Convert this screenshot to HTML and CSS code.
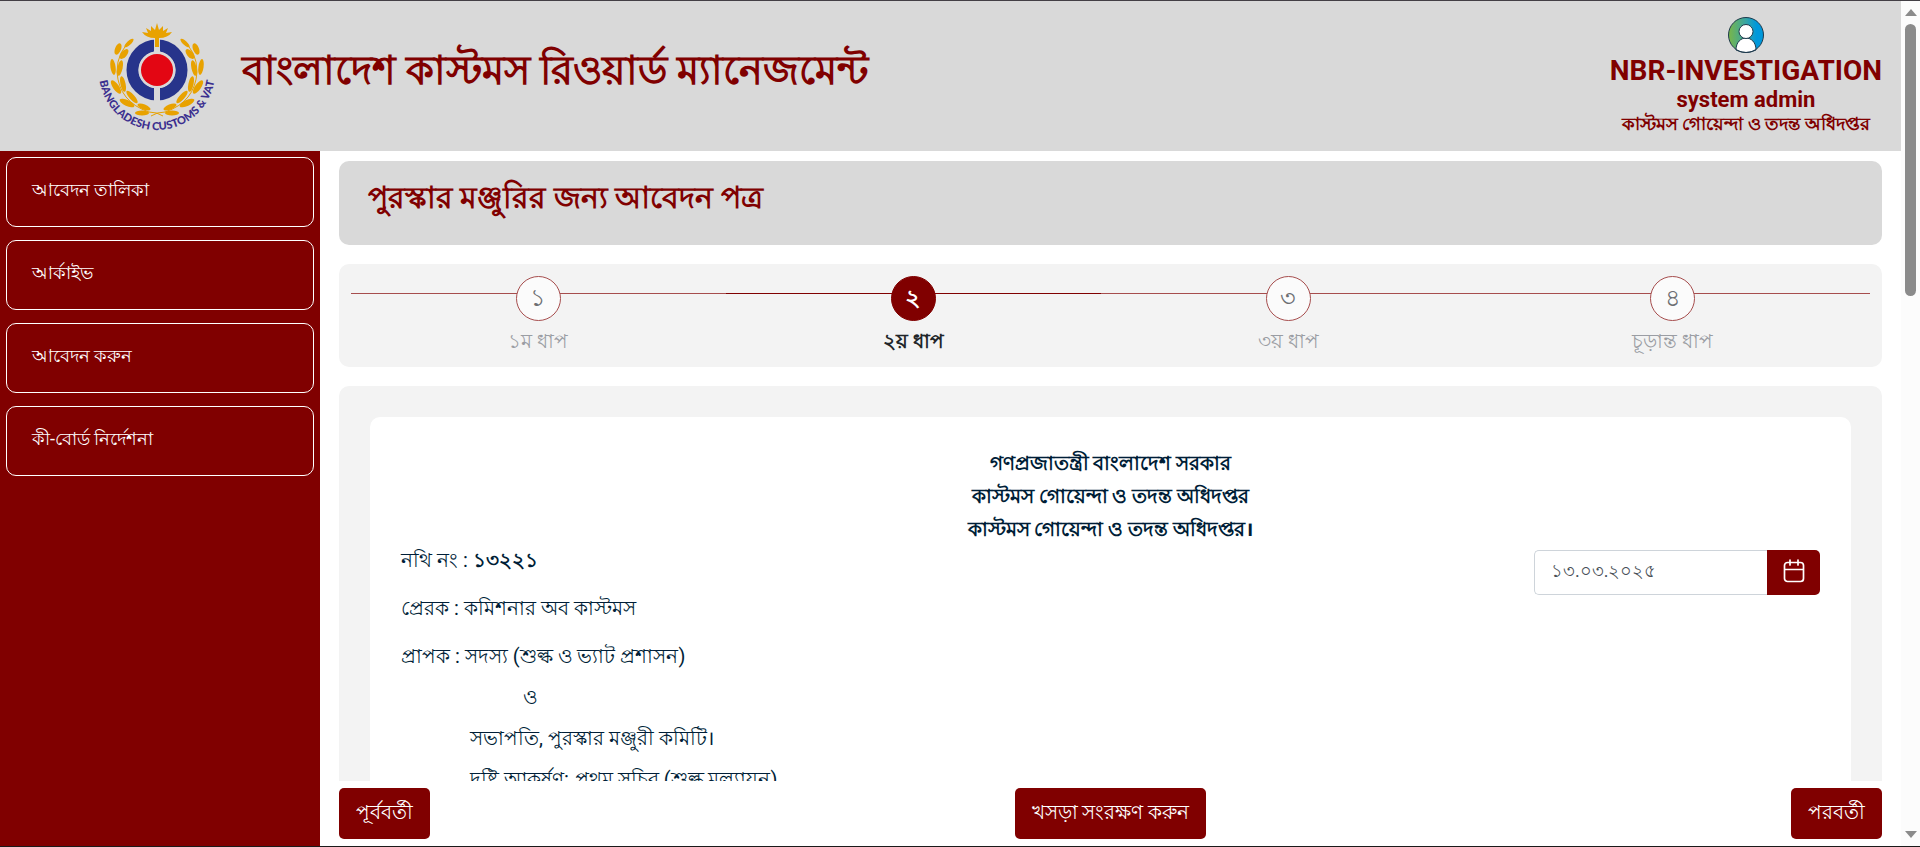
FILE: index.html
```
<!DOCTYPE html>
<html lang="bn">
<head>
    <meta charset="UTF-8">
    <meta name="viewport" content="width=device-width, initial-scale=1.0">
    <title>বাংলাদেশ কাস্টমস রিওয়ার্ড ম্যানেজমেন্ট</title>
    <link rel="stylesheet" href="styles.css">
</head>
<body>
    <div class="app">
        <!-- header -->
        <header class="header">
            <svg class="logo" viewBox="0 0 120 120" role="img" aria-label="Bangladesh Customs &amp; VAT">
                <defs>
                    <path id="logo-arc" d="M2 54 A58 58 0 0 0 118 54"/>
                    <g id="wreath" fill="#e8a200">
                        <path d="M35 22 Q20 33 20 54 Q22 84 52 94 Q60 94 66 98" fill="none" stroke="#e8a200" stroke-width="1"/>
                        <ellipse cx="32" cy="25" rx="6" ry="2" transform="rotate(-43 32 25)"/>
                        <ellipse cx="21" cy="31" rx="6" ry="3" transform="rotate(-68 21 31)"/>
                        <ellipse cx="27" cy="36" rx="6" ry="3" transform="rotate(-50 27 36)"/>
                        <ellipse cx="16" cy="49" rx="8" ry="2.6" transform="rotate(82 16 49)"/>
                        <ellipse cx="23" cy="50" rx="8" ry="2.6" transform="rotate(-78 23 50)"/>
                        <ellipse cx="19" cy="69" rx="8" ry="3" transform="rotate(55 19 69)"/>
                        <ellipse cx="26" cy="66" rx="8" ry="2.6" transform="rotate(78 26 66)"/>
                        <ellipse cx="30" cy="85" rx="8" ry="3" transform="rotate(25 30 85)"/>
                        <ellipse cx="35" cy="79" rx="8" ry="2.6" transform="rotate(48 35 79)"/>
                        <ellipse cx="45" cy="95" rx="7" ry="2.6" transform="rotate(0 45 95)"/>
                        <ellipse cx="47" cy="89" rx="7" ry="2.6" transform="rotate(22 47 89)"/>
                    </g>
                </defs>
                <circle cx="60" cy="52" r="24.5" fill="none" stroke="#27348b" stroke-width="12"/>
                <path d="M60 20V84" stroke="#d9d9d9" stroke-width="6"/>
                <circle cx="60" cy="52" r="18.5" fill="#d9d9d9"/>
                <circle cx="60" cy="52" r="16" fill="#e30613"/>
                <use href="#wreath"/>
                <use href="#wreath" transform="translate(120 0) scale(-1 1)"/>
                <path d="M60 5 L62 12 L66 8 L66 13 L71 10 L69 15 L75 14 Q71 20 62 20 V29 H58 V20 Q49 20 45 14 L51 15 L49 10 L54 13 L54 8 L58 12Z" fill="#e8a200"/>
                <text class="logo-text"><textPath href="#logo-arc" startOffset="50%">BANGLADESH CUSTOMS &amp; VAT</textPath></text>
            </svg>
            <h1>বাংলাদেশ কাস্টমস রিওয়ার্ড ম্যানেজমেন্ট</h1>
            <div class="user">
                <svg class="avatar" viewBox="0 0 36 36" aria-hidden="true">
                    <defs>
                        <linearGradient id="avatar-bg">
                            <stop offset="0" stop-color="#7ab648"/>
                            <stop offset="0.5" stop-color="#36a5a5"/>
                            <stop offset="0.8" stop-color="#0098db"/>
                        </linearGradient>
                    </defs>
                    <circle cx="18" cy="18" r="17.5" fill="url(#avatar-bg)"/>
                    <path d="M8 33 C8 17 28 17 28 33 Q18 38 8 33Z" fill="#fff" stroke="#1f3a4d"/>
                    <circle cx="18" cy="14.5" r="7" fill="#fff" stroke="#1f3a4d"/>
                    <circle cx="18" cy="18" r="17.5" fill="none" stroke="#1f3a4d"/>
                </svg>
                <span class="user-name">NBR-INVESTIGATION</span>
                <span class="user-role">system admin</span>
                <span class="user-office">কাস্টমস গোয়েন্দা ও তদন্ত অধিদপ্তর</span>
            </div>
        </header>

        <div class="content">
            <!-- sidebar -->
            <nav class="sidebar">
                <a href="#">আবেদন তালিকা</a>
                <a href="#">আর্কাইভ</a>
                <a href="#">আবেদন করুন</a>
                <a href="#">কী-বোর্ড নির্দেশনা</a>
            </nav>

            <main class="main">
                <div class="page-title">
                    <h2>পুরস্কার মঞ্জুরির জন্য আবেদন পত্র</h2>
                </div>

                <ol class="steps">
                    <li class="step"><span class="step-no">১</span><span class="step-label">১ম ধাপ</span></li>
                    <li class="step active"><span class="step-no">২</span><span class="step-label">২য় ধাপ</span></li>
                    <li class="step"><span class="step-no">৩</span><span class="step-label">৩য় ধাপ</span></li>
                    <li class="step"><span class="step-no">৪</span><span class="step-label">চূড়ান্ত ধাপ</span></li>
                </ol>

                <div class="form-panel">
                    <div class="letter">
                        <div class="letter-head">
                            <p>গণপ্রজাতন্ত্রী বাংলাদেশ সরকার</p>
                            <p>কাস্টমস গোয়েন্দা ও তদন্ত অধিদপ্তর</p>
                            <p>কাস্টমস গোয়েন্দা ও তদন্ত অধিদপ্তর।</p>
                        </div>
                        <div class="letter-body">
                            <div class="letter-text">
                                <p class="row">নথি নং : <b>১৩২২১</b></p>
                                <p class="row">প্রেরক : কমিশনার অব কাস্টমস</p>
                                <p class="row">প্রাপক : সদস্য (শুল্ক ও ভ্যাট প্রশাসন)</p>
                                <p class="and">ও</p>
                                <p class="sub">সভাপতি, পুরস্কার মঞ্জুরী কমিটি।</p>
                                <p class="sub">দৃষ্টি আকর্ষণ: প্রথম সচিব (শুল্ক মূল্যায়ন)</p>
                            </div>
                            <div class="date-group">
                                <input type="text" value="১৩.০৩.২০২৫" aria-label="তারিখ">
                                <button type="button" aria-label="ক্যালেন্ডার">
                                    <svg viewBox="0 0 24 24" width="24" height="24" fill="none" stroke="currentColor" stroke-width="1.7" stroke-linecap="round">
                                        <rect x="2.5" y="3.5" width="19" height="19" rx="3"/>
                                        <path d="M3 10.5H21M8 1V6M16 1V6"/>
                                    </svg>
                                </button>
                            </div>
                        </div>
                    </div>
                </div>

                <div class="actions">
                    <button type="button">পূর্ববর্তী</button>
                    <button type="button">খসড়া সংরক্ষণ করুন</button>
                    <button type="button">পরবর্তী</button>
                </div>
            </main>
        </div>
    </div>

    <!-- scrollbar -->
    <div class="scrollbar" aria-hidden="true">
        <span class="arrow-up"></span>
        <span class="thumb"></span>
        <span class="arrow-down"></span>
    </div>
</body>
</html>
```
FILE: styles.css
```
* {
    box-sizing: border-box;
}

body {
    font-family: Roboto, "Noto Sans", sans-serif;
    margin: 0;
    height: 100vh;
    display: flex;
    overflow: hidden;
    background: #fff;
    color: #001e37;
    border-top: 1px solid #433f45;
    border-bottom: 1px solid #1a1a1a;
}

h1, h2, p, ol {
    margin: 0;
    padding: 0;
}

button, input {
    font-family: inherit;
}

.app {
    flex: 1;
    min-width: 0;
    display: flex;
    flex-direction: column;
}

/* header */
.header {
    flex: none;
    height: 150px;
    display: flex;
    align-items: flex-start;
    background: #d9d9d9;
    color: #800000;
    padding: 0 19px 0 97px;
}

.logo {
    width: 120px;
    height: 120px;
    margin-top: 17px;
    overflow: visible;
}

.logo-text {
    font-family: Lato, sans-serif;
    font-size: 11px;
    font-weight: 900;
    fill: #3b2f8f;
    text-anchor: middle;
}

.header h1 {
    margin-left: 25px;
    font-size: 40px;
    line-height: 140px;
    font-weight: 700;
}

.user {
    margin-left: auto;
    padding-top: 16px;
    display: flex;
    flex-direction: column;
    align-items: center;
    font-weight: 700;
}

.avatar {
    width: 36px;
    height: 36px;
}

.user-name {
    font-size: 28px;
    line-height: 36px;
}

.user-role {
    font-size: 22px;
    line-height: 22px;
}

.user-office {
    font-size: 18px;
    line-height: 26px;
}

/* sidebar */
.content {
    flex: 1;
    min-height: 0;
    display: flex;
}

.sidebar {
    width: 320px;
    flex: none;
    background: #800000;
    padding: 6px;
    display: flex;
    flex-direction: column;
    gap: 13px;
}

.sidebar a {
    height: 70px;
    padding: 0 25px;
    border: 1px solid #fff;
    border-radius: 10px;
    color: #fff;
    font-size: 18px;
    line-height: 64px;
    text-decoration: none;
}

/* main */
.main {
    flex: 1;
    min-width: 0;
    padding: 10px 19px 7px;
    display: flex;
    flex-direction: column;
}

.page-title {
    flex: none;
    height: 84px;
    padding: 0 29px;
    background: #d9d9d9;
    border-radius: 10px;
    color: #800000;
}

.page-title h2 {
    font-size: 30px;
    line-height: 74px;
}

.steps {
    flex: none;
    height: 103px;
    margin: 19px 0;
    padding: 12px;
    list-style: none;
    display: grid;
    grid-template-columns: 19fr 19fr 19fr 20fr;
    background: #f3f3f3;
    border-radius: 10px;
}

.step {
    position: relative;
    display: flex;
    flex-direction: column;
    align-items: center;
    color: #9a9da3;
}

.step::before {
    content: "";
    position: absolute;
    top: 17px;
    left: 0;
    right: 0;
    height: 1px;
    background: #a64d4d;
}

.step-no {
    position: relative;
    width: 45px;
    height: 45px;
    border: 1px solid #a64d4d;
    border-radius: 50%;
    background: #fbfbfb;
    color: #6c6e72;
    font-size: 24px;
    line-height: 42px;
    text-align: center;
}

.step-label {
    font-size: 20px;
    line-height: 40px;
}

.step.active {
    color: #212529;
    font-weight: 700;
}

.step.active::before {
    background: #800000;
}

.step.active .step-no {
    background: #800000;
    border-color: #800000;
    color: #fff;
}

/* letter */
.form-panel {
    flex: 1;
    min-height: 0;
    overflow: hidden;
    padding: 31px 31px 0;
    background: #f3f3f3;
    border-radius: 10px 10px 0 0;
}

.letter {
    height: 900px;
    padding: 30px 31px;
    background: #fff;
    border-radius: 10px;
}

.letter-head {
    text-align: center;
    font-size: 20px;
    line-height: 33px;
    font-weight: 700;
}

.letter-body {
    display: flex;
    justify-content: space-between;
    align-items: flex-start;
}

.letter-text {
    font-size: 20px;
    line-height: 28px;
}

.row + .row {
    margin-top: 20px;
}

.and, .sub {
    margin-top: 13px;
}

.and {
    padding-left: 122px;
}

.sub {
    padding-left: 69px;
}

.date-group {
    display: flex;
    width: 286px;
    height: 45px;
    margin-top: 4px;
}

.date-group input {
    flex: 1;
    min-width: 0;
    padding: 0 16px;
    border: 1px solid #ced4da;
    border-right: 0;
    border-radius: 5px 0 0 5px;
    font-size: 18px;
    color: #495057;
}

.date-group button {
    width: 53px;
    padding: 0;
    border: 0;
    border-radius: 0 5px 5px 0;
    background: #800000;
    color: #fff;
}

/* actions */
.actions {
    flex: none;
    display: flex;
    justify-content: space-between;
    padding-top: 7px;
}

.actions button {
    height: 51px;
    padding: 0 17px;
    border: 0;
    border-radius: 5px;
    background: #800000;
    color: #fff;
    font-size: 20px;
}

/* scrollbar */
.scrollbar {
    flex: none;
    width: 19px;
    display: flex;
    flex-direction: column;
    align-items: center;
    padding: 8px 0;
    background: #fcfcfc;
}

.arrow-up, .arrow-down {
    border: 6px solid transparent;
}

.arrow-up {
    border-top: 0;
    border-bottom: 7px solid #8b8b8b;
}

.thumb {
    width: 11px;
    height: 272px;
    margin: 8px 0 auto;
    border-radius: 6px;
    background: #8b8b8b;
}

.arrow-down {
    border-bottom: 0;
    border-top: 7px solid #8b8b8b;
}
```
